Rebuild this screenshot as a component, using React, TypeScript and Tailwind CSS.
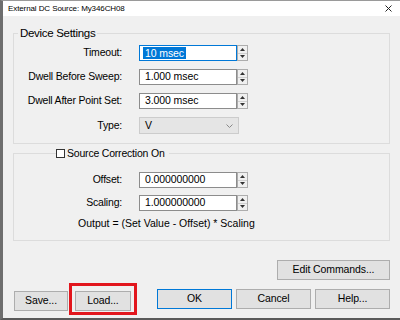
import React from 'react'

const font = { fontFamily: '"Liberation Sans", Arial, sans-serif' }

function Spinner() {
  return (
    <div className="w-[11px] h-full border border-[#adadad] bg-[#f0f0f0] flex flex-col">
      <div className="flex-1 flex items-center justify-center border-b border-[#d0d0d0]">
        <svg width="5" height="3" viewBox="0 0 5 3"><path d="M2.5 0 L5 3 L0 3 Z" fill="#333" /></svg>
      </div>
      <div className="flex-1 flex items-center justify-center">
        <svg width="5" height="3" viewBox="0 0 5 3"><path d="M0 0 L5 0 L2.5 3 Z" fill="#333" /></svg>
      </div>
    </div>
  )
}

function NumField({ value, focused }: { value: string; focused?: boolean }) {
  return (
    <div className="flex h-[16px]">
      <div
        className={
          'w-[98px] h-full bg-white flex items-center pl-[3px] text-[10.5px] tracking-[-0.1px] text-black border ' +
          (focused ? 'border-[#0078d7]' : 'border-[#8c8c8c]')
        }
      >
        {focused ? <span className="bg-[#0078d7] text-white px-[2px] leading-[12px]">{value}</span> : <span className="pl-[2px]">{value}</span>}
      </div>
      <Spinner />
    </div>
  )
}

function Row({ label, children }: { label: string; children: React.ReactNode }) {
  return (
    <div className="flex items-center">
      <div className="w-[109px] text-right text-[10.5px] tracking-[-0.2px] text-black pr-[1px]">{label}</div>
      <div className="ml-[16px]">{children}</div>
    </div>
  )
}

function Btn({ children, primary, w }: { children: React.ReactNode; primary?: boolean; w: string }) {
  return (
    <button
      className={
        'h-[20px] bg-[#e1e1e1] text-[10.5px] tracking-[-0.1px] text-black border ' +
        (primary ? 'border-[#0078d7] ' : 'border-[#adadad] ') +
        w
      }
    >
      {children}
    </button>
  )
}

export default function App() {
  return (
    <div
      style={font}
      className="w-[400px] h-[320px] bg-[#f0f0f0] overflow-hidden border-t border-t-[#9a9a9a] border-l-[3px] border-l-[#6e6e6e] border-b-2 border-b-[#5a5a5a] flex flex-col"
    >
      {/* title bar */}
      <div className="h-[15px] bg-white flex items-center justify-between pl-[5px] pr-[8px] shrink-0">
        <span className="text-[8px] text-black tracking-[-0.1px]">External DC Source: My346CH08</span>
        <svg width="7" height="7" viewBox="0 0 7 7">
          <path d="M0.5 0.5 L6.5 6.5 M6.5 0.5 L0.5 6.5" stroke="#222" strokeWidth="1" />
        </svg>
      </div>

      <div className="ml-[10px] mr-[10px] flex flex-col">
        {/* Device Settings */}
        <fieldset className="mt-[10px] border border-[#dcdcdc] h-[118px] pb-[8px]">
          <legend className="ml-[4px] px-[2px] text-[11.5px] tracking-[-0.3px] leading-[14px] text-black">Device Settings</legend>
          <div className="flex flex-col gap-[8px] mt-[5px]">
            <Row label="Timeout:"><NumField value="10 msec" focused /></Row>
            <Row label="Dwell Before Sweep:"><NumField value="1.000 msec" /></Row>
            <Row label="Dwell After Point Set:"><NumField value="3.000 msec" /></Row>
            <Row label="Type:">
              <div className="w-[100px] h-[17px] bg-[#e5e5e5] border border-[#cccccc] flex items-center justify-between pl-[5px] pr-[5px] text-[10.5px] text-black">
                <span>V</span>
                <svg width="7" height="4" viewBox="0 0 7 4"><path d="M0.5 0.5 L3.5 3.5 L6.5 0.5" stroke="#888" fill="none" strokeWidth="1" /></svg>
              </div>
            </Row>
          </div>
        </fieldset>

        {/* Source Correction */}
        <fieldset className="mt-[2px] border border-[#dcdcdc] h-[95px]">
          <legend className="ml-[42px] pr-[4px] text-[10.5px] tracking-[-0.2px] leading-[14px] text-black flex items-center">
            <span className="w-[9px] h-[9px] border border-[#333] bg-white mr-[2px]"></span>
            Source Correction On
          </legend>
          <div className="flex flex-col gap-[7px] mt-[12px]">
            <Row label="Offset:"><NumField value="0.000000000" /></Row>
            <Row label="Scaling:"><NumField value="1.000000000" /></Row>
          </div>
          <div className="mt-[5px] pl-[64px] text-[10.5px] text-black">Output = (Set Value - Offset) * Scaling</div>
        </fieldset>

        <div className="flex justify-end mt-[19px]">
          <Btn w="w-[113px]">Edit Commands...</Btn>
        </div>

        <div className="flex items-center mt-[9px] h-[20px]">
          <div className="ml-[1px]"><Btn w="w-[54px]">Save...</Btn></div>
          <div className="relative ml-[7px]">
            <Btn w="w-[56px]">Load...</Btn>
            <div className="absolute left-[-6px] top-[-4px] w-[68px] h-[32px] border-[3px] border-[#e2161d] pointer-events-none"></div>
          </div>
          <div className="ml-[26px] flex gap-[4px]">
            <Btn primary w="w-[75px]">OK</Btn>
            <Btn w="w-[75px]">Cancel</Btn>
            <Btn w="w-[75px]">Help...</Btn>
          </div>
        </div>
      </div>
    </div>
  )
}
